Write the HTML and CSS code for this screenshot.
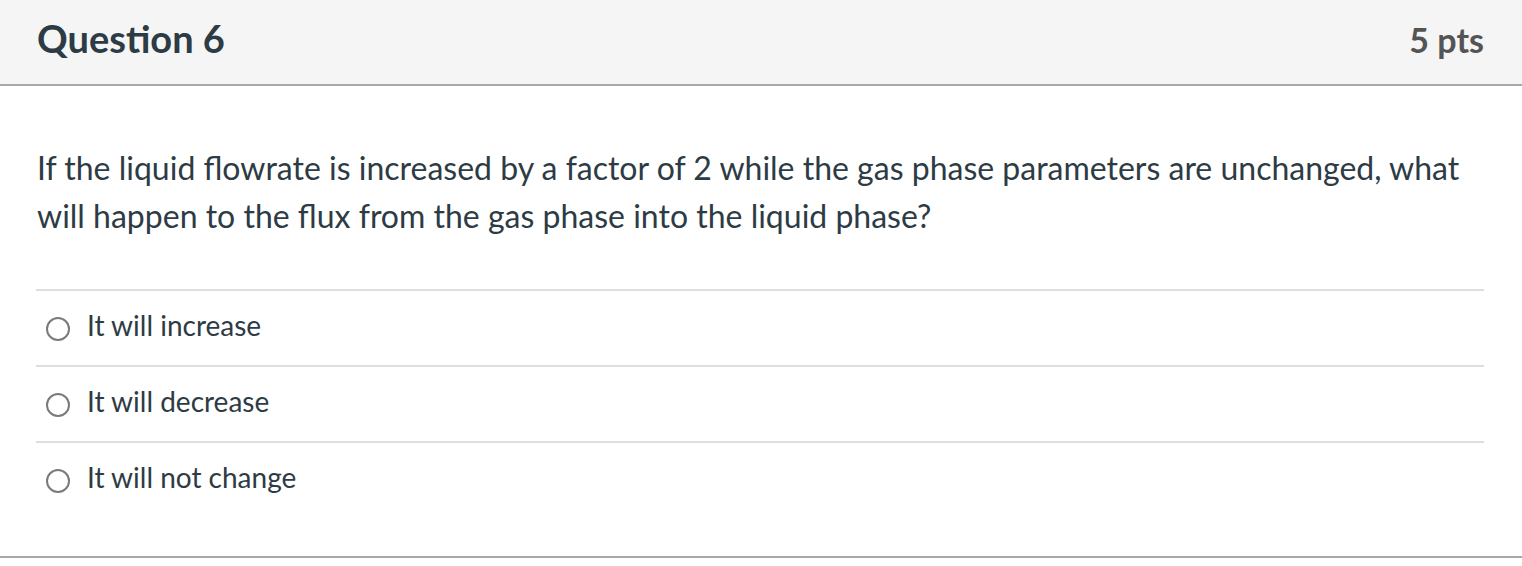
FILE: index.html
```html
<!DOCTYPE html>
<html>
<head>
<meta charset="utf-8">
<link rel="stylesheet" href="styles.css">
</head>
<body>
<div class="question">
  <div class="header">
    <h2 class="title">Question 6</h2>
    <span class="points">5 pts</span>
  </div>
  <div class="content">
    <p class="text">If the liquid flowrate is increased by a factor of 2 while the gas phase parameters are unchanged, what will happen to the flux from the gas phase into the liquid phase?</p>
    <div class="answers">
      <label class="answer"><span class="radio"></span><span class="label">It will increase</span></label>
      <label class="answer"><span class="radio"></span><span class="label">It will decrease</span></label>
      <label class="answer"><span class="radio"></span><span class="label">It will not change</span></label>
    </div>
  </div>
</div>
</body>
</html>
```
FILE: styles.css
```css
html, body {
  margin: 0;
  padding: 0;
  background: #ffffff;
}
body {
  font-family: Lato, "Open Sans", sans-serif;
  color: #2d3b45;
}
.question {
  border-bottom: 2px solid #a8a8a8;
  width: 100%;
}
.header {
  background: #f5f5f5;
  border-bottom: 2px solid #a8a8a8;
  height: 86px;
  box-sizing: border-box;
  display: flex;
  align-items: baseline;
  justify-content: space-between;
  padding: 15px 38px 0 37px;
}
.title {
  margin: 0;
  font-size: 38px;
  line-height: 46px;
  font-weight: 700;
  color: #2d3b45;
}
.points {
  font-size: 34px;
  line-height: 46px;
  font-weight: 700;
  color: #545454;
}
.content {
  padding: 0 38px 0 36px;
}
.text {
  margin: 0;
  padding: 58px 0 49px 1px;
  font-size: 32px;
  line-height: 48px;
}
.answers {
  display: flex;
  flex-direction: column;
}
.answer {
  display: flex;
  align-items: flex-start;
  height: 76px;
  border-top: 2px solid #dedede;
  box-sizing: border-box;
  padding: 17px 0 0 10px;
}
.answer:last-child {
  height: 115px;
}
.radio {
  width: 24px;
  height: 24px;
  box-sizing: border-box;
  border: 2px solid #7a7a7a;
  border-radius: 50%;
  flex: none;
  margin: 9px 17px 0 0;
}
.label {
  font-size: 28px;
  line-height: 34px;
}
```
